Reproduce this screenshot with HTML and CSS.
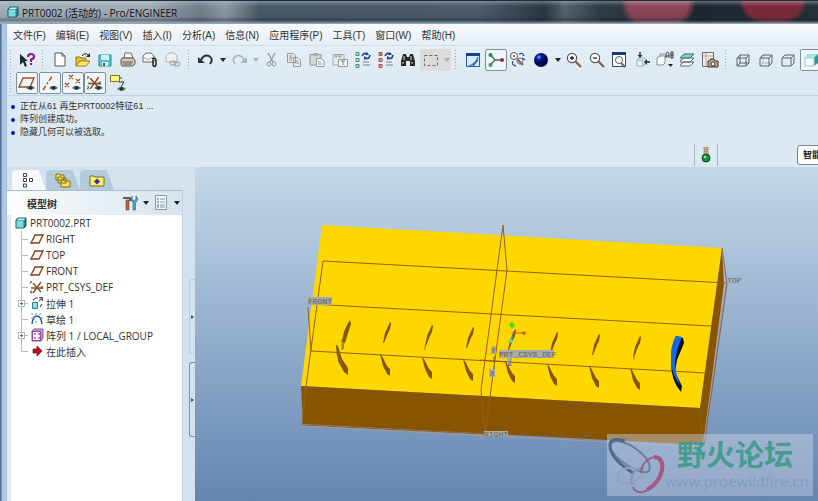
FILE: index.html
```html
<!DOCTYPE html>
<html lang="zh-CN">
<head>
    <meta charset="UTF-8">
    <meta name="viewport" content="width=device-width, initial-scale=1.0">
    <title>PRT0002 (活动的) - Pro/ENGINEER</title>
    <link rel="stylesheet" href="styles.css">
</head>
<body>
    <svg class="defs" aria-hidden="true">
        <symbol id="eye" viewBox="0 0 10 6">
            <path d="M0 3Q5-2 10 3Q5 7 0 3" fill="#5a6a66"/>
            <circle cx="5" cy="3" r="2" fill="#0d3c2a"/>
        </symbol>
        <symbol id="plane" viewBox="0 0 14 12">
            <path d="M5 2H13L9 10H1Z" fill="#fdf4ea" stroke="#7a4020" stroke-width="1.300"/>
        </symbol>
        <symbol id="csys" viewBox="0 0 14 14">
            <path d="M3 3L11 12M11 2L3 13M1 8H13" stroke="#8a4a24" stroke-width="1.4" fill="none"/>
            <path d="M0 1L2 3M2 1L0 4M11 6L13 9M13 6L11 9M0 11H2L0 13H2" stroke="#555" stroke-width=".8" fill="none"/>
        </symbol>
        <symbol id="cube" viewBox="0 0 12 12">
            <path d="M1 3L3 1H11V9L9 11H1Z" fill="#2b7f86" stroke="#1c5960"/>
            <path d="M1.500 3.500H8.500V10.500H1.500Z" fill="#79dcdc"/>
            <path d="M2 3L3.500 1.500H10.500L9 3Z" fill="#c9f5f2"/>
        </symbol>
        <symbol id="lens" viewBox="0 0 18 18">
            <path d="M10 10L16 16" stroke="#8a5a48" stroke-width="2.2"/>
            <circle cx="7" cy="7" r="4.600" fill="#fff" stroke="#555" stroke-width="1.200"/>
        </symbol>
        <symbol id="slot" viewBox="0 0 14 60" overflow="visible">
            <path d="M9 0L10 1L9 7L7 11L3 21L2 21L4 11Z" fill="#875500"/>
            <path d="M-1 32L1 34L6 44L9 47L9 54L6 52L2 44Z" fill="#875500"/>
        </symbol>
    </svg>

    <header class="titlebar">
        <svg width="12" height="12"><use href="#cube"/></svg>
        <h1>PRT0002 (活动的) - Pro/ENGINEER</h1>
    </header>

    <div class="window">
        <nav class="menubar">
            <button>文件(F)</button>
            <button>编辑(E)</button>
            <button>视图(V)</button>
            <button>插入(I)</button>
            <button>分析(A)</button>
            <button>信息(N)</button>
            <button>应用程序(P)</button>
            <button>工具(T)</button>
            <button>窗口(W)</button>
            <button>帮助(H)</button>
        </nav>

        <div class="toolbars">
            <div class="toolbar">
                <span class="grip"></span>
                <button class="tool" aria-label="上下文帮助"><svg viewBox="0 0 18 18"><path d="M2 3V14L5 11L7 16L9 15L7 10H10Z" fill="#1c2b33"/><path d="M10 6Q10 3 13 3Q16 3 16 5.500Q16 8 13 8.500V11M13 12V14" fill="none" stroke="#8d1c8d" stroke-width="2.200"/></svg></button>
                <span class="grip"></span>
                <div class="group files">
                    <button class="tool" aria-label="新建"><svg viewBox="0 0 18 18"><path d="M4 2H11L14 5V15H4Z" fill="#fff" stroke="#555"/><path d="M11 2V5H14" fill="none" stroke="#555"/></svg></button>
                    <button class="tool" aria-label="打开"><svg viewBox="0 0 18 18"><path d="M2 15V6H6L7 7H12V10" fill="#e9bf32" stroke="#9a7a10"/><path d="M2 15L6 10H16L12 15Z" fill="#ffe873" stroke="#9a7a10"/><path d="M8 5Q11 1 14 4" fill="none" stroke="#222"/><path d="M16 2V6H12Z" fill="#222"/></svg></button>
                    <button class="tool" aria-label="保存"><svg viewBox="0 0 18 18"><path d="M3 4H15V15H3Z" fill="#52c7cf" stroke="#2d8a94"/><path d="M5 4H13V9H5Z" fill="#c9f3f2"/><path d="M6 11H12V15H6Z" fill="#e5eff0"/><path d="M7 12H9V15H7Z" fill="#37656a"/></svg></button>
                    <button class="tool" aria-label="打印"><svg viewBox="0 0 18 18"><path d="M6 2H12L14 7H5Z" fill="#fff" stroke="#6b6b6b"/><path d="M3 7H14L16 9V13L14 15H3L2 13V9Z" fill="#d5c7b8" stroke="#5b5552"/><path d="M3 11H14M4 13H13" stroke="#6a5a50"/></svg></button>
                    <button class="tool" aria-label="发送"><svg viewBox="0 0 18 18"><path d="M2 5L5 2H10L13 5V11H2Z" fill="#f7f7f5" stroke="#6a6a6a"/><path d="M2 6L7 9L13 5" fill="none" stroke="#aaa"/><path d="M11 8Q15 6 15 10V14Q13 17 12 14V9" fill="none" stroke="#222" stroke-width="1.500"/></svg></button>
                    <button class="tool" aria-label="链接"><svg viewBox="0 0 18 18"><path d="M2 5L5 2H10L13 5V11H2Z" fill="#eef1f2" stroke="#b1b8bb"/><rect x="6" y="10" width="6" height="4" rx="2" fill="none" stroke="#999"/><rect x="10" y="11" width="6" height="4" rx="2" fill="none" stroke="#999"/></svg></button>
                </div>
                <span class="grip"></span>
                <button class="tool" aria-label="撤消"><svg viewBox="0 0 18 18"><path d="M4 9Q7 3 12 5Q17 8 13 13" fill="none" stroke="#26343d" stroke-width="2"/><path d="M1 6V12H8Z" fill="#26343d"/></svg></button>
                <button class="drop" aria-label="撤消列表"></button>
                <button class="tool" aria-label="重做"><svg viewBox="0 0 18 18"><path d="M14 9Q11 3 6 5Q1 8 5 13" fill="none" stroke="#aab5bb" stroke-width="1.500"/><path d="M17 6V12H10Z" fill="#aab5bb"/></svg></button>
                <button class="drop dim" aria-label="重做列表"></button>
                <div class="group edit">
                    <button class="tool" aria-label="剪切"><svg viewBox="0 0 18 18"><path d="M5 2L10 11M12 2L7 11" stroke="#8f979b" stroke-width="1.300"/><circle cx="6" cy="13" r="2" fill="none" stroke="#8f979b"/><circle cx="11" cy="13" r="2" fill="none" stroke="#8f979b"/></svg></button>
                    <button class="tool" aria-label="复制"><svg viewBox="0 0 18 18"><path d="M1.500 2.500H7L9.500 5V11.500H1.500Z M7.500 6.500H12L14.500 9V15.500H7.500Z" fill="#e6eaeb" stroke="#949c9f"/><path d="M3 5H6M3 7H7M3 9H6M9 10H12M9 12H13" stroke="#949c9f"/></svg></button>
                    <button class="tool" aria-label="粘贴"><svg viewBox="0 0 18 18"><path d="M2 3.500H13V14H2Z" fill="#d3d7d8" stroke="#949c9f"/><path d="M5 2H10V5H5Z" fill="#aab0b2"/><path d="M8.500 7.500H13L16 10V15.500H8.500Z" fill="#f3f5f5" stroke="#949c9f"/><path d="M10 11H13M10 13H14" stroke="#949c9f"/></svg></button>
                    <button class="tool" aria-label="选择性粘贴"><svg viewBox="0 0 18 18"><path d="M2 3.500H13V14H2Z" fill="#e6eaeb" stroke="#aab0b2"/><path d="M4 3V6H6V3M8 3V6H10V3" fill="none" stroke="#949c9f"/><path d="M7.500 8.500H16.500V15.500H7.500Z" fill="#f3f5f5" stroke="#949c9f"/><path d="M12 10V14M10 10H14" stroke="#888"/></svg></button>
                    <button class="tool" aria-label="再生"><svg viewBox="0 0 18 18"><path d="M2 1.500H5V4.500H2Z M2 7.500H5V10.500H2Z M2 13.500H5V16.500H2Z" fill="#a9e8cf" stroke="#4a8a78"/><path d="M8 5Q10 1 13 3M16 4Q15 9 11 7" fill="none" stroke="#1c3f93" stroke-width="1.500"/><path d="M11 4H15L13 1ZM10 9V5L13 7Z" fill="#1c3f93"/><path d="M9 11H15M9 14H16" stroke="#7a8588"/></svg></button>
                    <button class="tool" aria-label="再生管理器"><svg viewBox="0 0 18 18"><path d="M2 1.500H5V4.500H2Z" fill="#e88787" stroke="#a34d5a"/><path d="M2 7.500H5V10.500H2Z M2 13.500H5V16.500H2Z" fill="#f0a0a0" stroke="#b3404e"/><path d="M8 5Q10 1 13 3M16 4Q15 9 11 7" fill="none" stroke="#1c3f93" stroke-width="1.500"/><path d="M11 4H15L13 1ZM10 9V5L13 7Z" fill="#1c3f93"/><path d="M9 11H15M9 14H16" stroke="#7a8588"/></svg></button>
                    <button class="tool" aria-label="查找"><svg viewBox="0 0 18 18"><path d="M4 3H7L8 6H10L11 3H14L16 10V15H11V10H7V15H2V10Z" fill="#2a2a2a"/><path d="M5 5V9M12 5V9M4 11V13M13 11V13" stroke="#d5d5d5"/></svg></button>
                    <button class="tool shaded" aria-label="框选"><svg viewBox="0 0 18 18"><path d="M2.500 4.500H15.500V14.500H2.500Z" fill="none" stroke="#6d6d6d" stroke-dasharray="3 2"/></svg></button>
                </div>
                <button class="drop dim shaded" aria-label="选择方式"></button>
                <span class="grip"></span>
                <div class="group view">
                    <button class="tool" aria-label="重画"><svg viewBox="0 0 18 18"><path d="M2.500 2.500H15.500V15.500H2.500Z" fill="#d5eefb" stroke="#2a5aa0"/><path d="M2 2H16V5H2Z" fill="#17408f"/><path d="M5 15Q12 13 14 6M9 15L14 9" fill="none" stroke="#3a6daa" stroke-width="1.200"/></svg></button>
                    <button class="tool pressed" aria-label="旋转中心"><svg viewBox="0 0 18 18"><path d="M3 3L8 9L3 14M8 9H15" fill="none" stroke="#4a6655" stroke-width="1.300"/><circle cx="3.500" cy="4" r="2" fill="#15954a"/><circle cx="3.500" cy="14" r="2" fill="#2aa65a"/><circle cx="15" cy="9" r="2" fill="#a02035"/></svg></button>
                    <button class="tool" aria-label="定向模式"><svg viewBox="0 0 18 18"><circle cx="5" cy="5" r="3.500" fill="#fff" stroke="#555"/><circle cx="5" cy="5" r="1" fill="#555"/><path d="M8 8L14 14" stroke="#8a5a48" stroke-width="2"/><path d="M10 3Q14 1 15 5M13 7L16 9M4 10Q2 14 7 15" fill="none" stroke="#284c9b" stroke-width="1.300"/><circle cx="11" cy="10" r="3" fill="none" stroke="#777"/></svg></button>
                    <button class="tool" aria-label="外观库"><svg viewBox="0 0 18 18"><defs><radialGradient id="ball" cx=".35" cy=".3"><stop offset="0" stop-color="#8ab0ff"/><stop offset=".35" stop-color="#0c22a5"/><stop offset="1" stop-color="#000349"/></radialGradient></defs><circle cx="9" cy="9" r="7" fill="url(#ball)"/></svg></button>
                </div>
                <button class="drop" aria-label="外观列表"></button>
                <div class="group zoom">
                    <button class="tool" aria-label="放大"><svg viewBox="0 0 18 18"><use href="#lens"/><path d="M5 7H9M7 5V9" stroke="#222" stroke-width="1.300"/></svg></button>
                    <button class="tool" aria-label="缩小"><svg viewBox="0 0 18 18"><use href="#lens"/><path d="M5 7H9" stroke="#222" stroke-width="1.300"/></svg></button>
                    <button class="tool" aria-label="重新调整"><svg viewBox="0 0 18 18"><path d="M2.500 2.500H15.500V15.500H2.500Z" fill="#fff" stroke="#2b4c85"/><path d="M2 1H16V4H2Z" fill="#1b397f"/><path d="M11 12L15 16" stroke="#8a5a48" stroke-width="2"/><circle cx="9" cy="9" r="3.500" fill="#fff" stroke="#555"/></svg></button>
                    <button class="tool" aria-label="重定向"><svg viewBox="0 0 18 18"><path d="M4 9L6 7H12V13L10 15H4Z" fill="#fff" stroke="#8ab"/><path d="M4 9H10V15" fill="#d9eff0" stroke="#8ab"/><path d="M7 1V5M17 11H13" stroke="#222" stroke-width="1.300"/><path d="M4.500 4H9.500L7 7ZM14 8V14L11 11Z" fill="#24353a"/></svg></button>
                    <button class="tool" aria-label="已保存视图"><svg viewBox="0 0 18 18"><path d="M1 7L4 5H9V12L7 14H1Z" fill="#fff" stroke="#7f929b"/><path d="M4 5V3H9" fill="none" stroke="#7f929b"/><path d="M10 7V2.500Q11.500 0 13 2.500V7M10 5H13M15 1V7H17V1H15M15 4H17" fill="none" stroke="#333"/><path d="M12 13H17L14.500 16Z" fill="#222"/></svg></button>
                    <button class="tool" aria-label="层"><svg viewBox="0 0 18 18"><path d="M2 14L6 11H16L12 15H2M2 10L6 7H16L12 11H2" fill="#fff" stroke="#567"/><path d="M2 7L6 3H16L12 7Z" fill="#74d8cf" stroke="#456b70"/></svg></button>
                    <button class="tool" aria-label="视图管理器"><svg viewBox="0 0 18 18"><path d="M1.500 1.500H12.500V15.500H1.500Z" fill="#f5f0eb" stroke="#6d6d6d"/><path d="M5 2V15M2 5H12M7 8H12" stroke="#a8a29c"/><path d="M7 10H9L10 8H13L14 10H17V16H7Z" fill="#b9a89a" stroke="#333"/><circle cx="12" cy="13" r="2" fill="#fff" stroke="#333"/></svg></button>
                </div>
                <span class="grip"></span>
                <div class="group shade">
                    <button class="tool" aria-label="线框"><svg viewBox="0 0 18 18"><path d="M3 7H12V15H3ZM6 4H15V12H6ZM3 7L6 4M12 7L15 4M12 15L15 12M3 15L6 12" fill="none" stroke="#5c656a"/></svg></button>
                    <button class="tool" aria-label="隐藏线"><svg viewBox="0 0 18 18"><path d="M6 4V12H15M3 15L6 12" fill="none" stroke="#b3bbbe"/><path d="M3 7H12V15H3ZM3 7L6 4H15V12L12 15M12 7L15 4" fill="none" stroke="#5c656a"/></svg></button>
                    <button class="tool" aria-label="无隐藏线"><svg viewBox="0 0 18 18"><path d="M3 7H12V15H3ZM3 7L6 4H15V12L12 15M12 7L15 4" fill="none" stroke="#5c656a"/></svg></button>
                    <button class="tool pressed" aria-label="着色"><svg viewBox="0 0 18 18"><path d="M3 7L6 3H16V12L12 15H3Z" fill="#2c969b"/><path d="M3 7H12V15H3Z" fill="#f4ffff" stroke="#a9c6ca"/><path d="M3 7L6 3H16L12 7Z" fill="#9be8e4"/></svg></button>
                </div>
            </div>

            <div class="toolbar">
                <span class="grip"></span>
                <div class="group datum">
                    <button class="tool pressed" aria-label="平面显示"><svg viewBox="0 0 18 18"><path d="M5 4H16L12 13H1Z" fill="none" stroke="#a04f2c" stroke-width="1.400"/><use href="#eye" x="8" y="11" width="9" height="6"/></svg></button>
                    <button class="tool pressed" aria-label="轴显示"><svg viewBox="0 0 18 18"><path d="M2 16L12 1" stroke="#a04f2c" stroke-width="1.500" stroke-dasharray="5 2 2 2"/><use href="#eye" x="8" y="11" width="9" height="6"/></svg></button>
                    <button class="tool pressed" aria-label="点显示"><svg viewBox="0 0 18 18"><path d="M5 1L9 5M9 1L5 5M1 9L5 13M5 9L1 13M12 5L16 9M16 5L12 9" stroke="#a04f2c" stroke-width="1.300"/><use href="#eye" x="8" y="11" width="9" height="6"/></svg></button>
                    <button class="tool pressed" aria-label="坐标系显示"><svg viewBox="0 0 18 18"><use href="#csys" x="1" y="1" width="15" height="15"/><use href="#eye" x="8" y="11" width="9" height="6"/></svg></button>
                    <button class="tool" aria-label="注释显示"><svg viewBox="0 0 18 18"><path d="M1.500 1.500H10.500V7.500H1.500Z" fill="#fbf67a" stroke="#77752e"/><path d="M11 4H13M10 8H15L12 13" fill="none" stroke="#333"/><use href="#eye" x="8" y="12" width="9" height="6"/></svg></button>
                </div>
            </div>
        </div>

        <section class="messages">
            <ul>
                <li>正在从61 再生PRT0002特征61 ...</li>
                <li>阵列创建成功。</li>
                <li>隐藏几何可以被选取。</li>
            </ul>
            <div class="status">
                <span class="lamp"><svg width="10" height="16" viewBox="0 0 10 16"><path d="M3 0H7V3H3ZM3 4H7V7H3Z" fill="#d3b08f" stroke="#9f7a58" stroke-width=".8"/><circle cx="5" cy="11" r="4" fill="#16913a" stroke="#0a4e1c"/><circle cx="4" cy="10" r="1.300" fill="#8aee9a"/></svg></span>
                <select aria-label="过滤器">
                    <option>智能</option>
                    <option>特征</option>
                    <option>几何</option>
                </select>
            </div>
        </section>

        <main class="work">
            <aside class="navigator">
                <div class="tabs">
                    <button class="tab active" aria-label="模型树"><svg width="14" height="16" viewBox="0 0 14 16"><path d="M2.500 1.500H5.500V4.500H2.500ZM2.500 6.500H5.500V9.500H2.500ZM2.500 12H5.500V15H2.500ZM8.500 6.500H11.500V9.500H8.500Z" fill="#fff" stroke="#444"/></svg></button>
                    <button class="tab" aria-label="文件夹浏览器"><svg width="16" height="16" viewBox="0 0 16 16"><path d="M1 2H4L5 3H9V8H1ZM3 5H6L7 6H11V11H3ZM6 8H9L10 9H15V15H6Z" fill="#f6e15b" stroke="#7d6c14"/></svg></button>
                    <button class="tab" aria-label="收藏夹"><svg width="16" height="16" viewBox="0 0 16 16"><path d="M1 4H5L6 5H15V14H1Z" fill="#faef6f" stroke="#7d6c14"/><path d="M8 6.500L11 9.500L8 12.500L5 9.500Z" fill="#3c2e9a"/></svg></button>
                </div>
                <div class="panel">
                    <div class="panel-head">
                        <h2>模型树</h2>
                        <button class="tool" aria-label="设置"><svg viewBox="0 0 18 18"><path d="M2 3H9L11 5V7H8V5H2Z" fill="#555e66"/><path d="M5 6H8V16H5Z" fill="#b06a3f" stroke="#6e4024" stroke-width=".6"/><path d="M11 2V5L13 7L15 5V2L17 5L14.500 9V16H12V9L10 6Z" fill="#4ba3c7" stroke="#2b6080" stroke-width=".6"/></svg></button>
                        <button class="drop" aria-label="设置列表"></button>
                        <button class="tool" aria-label="显示"><svg viewBox="0 0 18 18"><path d="M3.500 1.500H14.500V15.500H3.500Z" fill="#f0f5fa" stroke="#8897a8"/><path d="M5 5H7M5 8H7M5 11H7M5 13H7" stroke="#2a6aa5"/><path d="M8 5H13M8 8H13M8 11H13M8 13H13" stroke="#8b98a5"/></svg></button>
                        <button class="drop" aria-label="显示列表"></button>
                    </div>
                    <ul class="tree">
                        <li class="root"><svg width="12" height="12"><use href="#cube"/></svg>PRT0002.PRT</li>
                        <li><span class="branch"></span><svg width="14" height="12"><use href="#plane"/></svg>RIGHT</li>
                        <li><span class="branch"></span><svg width="14" height="12"><use href="#plane"/></svg>TOP</li>
                        <li><span class="branch"></span><svg width="14" height="12"><use href="#plane"/></svg>FRONT</li>
                        <li><span class="branch"></span><svg width="14" height="14"><use href="#csys"/></svg>PRT_CSYS_DEF</li>
                        <li><span class="branch"><button class="expand" aria-label="展开"></button></span><svg width="14" height="14" viewBox="0 0 14 14"><path d="M2.500 6.500H7.500V12.500H2.500Z" fill="#8ce3df" stroke="#337e86"/><path d="M3 4L6 2H8M10 11L12 8M9 5L12 2M9 1.500H12.500V5" fill="none" stroke="#556" stroke-width="1.200"/></svg>拉伸 1</li>
                        <li><span class="branch"></span><svg width="14" height="14" viewBox="0 0 14 14"><path d="M2 12Q3 4 7 4Q11 4 12 12" fill="none" stroke="#235a9f" stroke-width="1.500"/><path d="M1 2H13M1 6H3M11 6H13M5 10H9" stroke="#4ba4c4" stroke-dasharray="2 2"/></svg>草绘 1</li>
                        <li><span class="branch"><button class="expand" aria-label="展开"></button></span><svg width="14" height="14" viewBox="0 0 14 14"><path d="M2 3L4 1H13V10L11 13H2Z" fill="#c3a3cc" stroke="#87509a"/><path d="M2.500 3.500H10.500V12.500H2.500Z" fill="#fff" stroke="#87459c"/><path d="M4 6H6M8 6H10M4 10H6M8 10H10" stroke="#b04ca2" stroke-width="1.500"/></svg>阵列 1 / LOCAL_GROUP</li>
                        <li class="last"><span class="branch"></span><svg width="14" height="12" viewBox="0 0 14 12"><path d="M3 4H7V1L12 6L7 11V8H3Z" fill="#b80f20" stroke="#6e0710" stroke-width=".7"/></svg>在此插入</li>
                    </ul>
                </div>
                <div class="sash">
                    <button class="faint" aria-label="展开导航器"></button>
                    <button aria-label="收起导航器"></button>
                </div>
            </aside>

            <section class="viewport">
                <svg class="model" viewBox="195 167 623 334" preserveAspectRatio="xMinYMin meet">
                    <!-- block -->
                    <path d="M322 225L722 248L700 408L301 386Z" fill="#ffd700"/>
                    <path d="M301 386L700 408L703 445L303 424Z" fill="#875500"/>
                    <path d="M722 248L724 284L703 445L700 408Z" fill="#875500"/>
                    <!-- datum planes -->
                    <g fill="none" stroke="#966018">
                        <path d="M306 386L323 261L726 283M310 304L711 326M311 351L705 373"/>
                        <path d="M308 307L311 351M306 386L302 425L485 434L481 390L503 225L507 270L485 434"/>
                        <path d="M480 360L511 362"/>
                    </g>
                    <path d="M302 426L703 447L726 284" fill="none" stroke="#a39a9c"/>
                    <path d="M722 248L727 284L704 445" fill="none" stroke="#8f6048"/>
                    <!-- slots -->
                    <path d="M350 320Q343 330 342 342L345 343L348 333L351 324Z" fill="#875500"/>
                    <path d="M342 339V350M344 342L343 349" stroke="#777044"/>
                    <path d="M336 345L338 346L342 359L348 368L348 375L344 372L338 361Z" fill="#875500"/>
                    <path d="M337 345V355L342 364" fill="none" stroke="#77756a"/>
                    <use href="#slot" x="381" y="322" width="14" height="60"/>
                    <use href="#slot" x="423" y="325" width="14" height="60"/>
                    <use href="#slot" x="464" y="327" width="14" height="60"/>
                    <use href="#slot" x="506" y="329" width="14" height="60"/>
                    <use href="#slot" x="548" y="332" width="14" height="60"/>
                    <use href="#slot" x="590" y="334" width="14" height="60"/>
                    <use href="#slot" x="631" y="336" width="14" height="60"/>
                    <path d="M425 346V350M634 356V360" stroke="#a07a20"/>
                    <path d="M676 336L683 338L684 343L677 360L675 372L682 386L681 392Q671 381 671 362Q671 345 676 336Z" fill="#07101f"/>
                    <path d="M676 336L682 337Q676 350 675 363Q676 378 681 386Q672 376 671 362Q670 346 676 336Z" fill="#1468f0"/>
                    <!-- coordinate system -->
                    <path d="M494 346V375" stroke="#6c6b5c" stroke-dasharray="7 3"/>
                    <path d="M512 333H523" stroke="#d6522a"/>
                    <path d="M512 326V342" stroke="#30cbb0" stroke-dasharray="3 2"/>
                    <circle cx="512" cy="325" r="2.500" fill="#3be010"/>
                    <circle cx="524" cy="333" r="1.700" fill="#dc4c24"/>
                    <circle cx="511" cy="341" r="2" fill="#40e4cc"/>
                    <g fill="#a6aaa8">
                        <rect x="308" y="297" width="24" height="8"/>
                        <rect x="499" y="350" width="55" height="8"/>
                        <rect x="491" y="347" width="5" height="7"/>
                        <rect x="489" y="369" width="6" height="8"/>
                        <rect x="507" y="358" width="5" height="8"/>
                        <rect x="484" y="431" width="24" height="6"/>
                    </g>
                    <g class="labels">
                        <text x="308" y="304">FRONT</text>
                        <text x="499" y="357">PRT_CSYS_DEF</text>
                        <text x="491" y="353">Y</text>
                        <text x="490" y="376">X</text>
                        <text x="507" y="366">Z</text>
                        <text x="484" y="437">RIGHT</text>
                        <text x="727" y="283">TOP</text>
                    </g>
                </svg>
                <div class="watermark">
                    <svg width="58" height="60" viewBox="0 0 58 60">
                        <g fill="none">
                            <path d="M4 8C14 0 48 22 42 36C36 42 4 24 3 10" stroke="#6880a5" stroke-width="2"/>
                            <path d="M26 38Q4 24 3 12Q2 1 18 6" stroke="#4f688f" stroke-width="3"/>
                            <path d="M30 36C20 28 8 38 11 44C14 52 30 48 35 39" stroke="#8fa3c1" stroke-width="2"/>
                            <path d="M38 34C30 30 22 40 25 50" stroke="#8398bb" stroke-width="2"/>
                            <path d="M34 38C34 26 48 18 54 24C60 34 50 54 36 57Q28 58 26 52" stroke="#9a5f86" stroke-width="2"/>
                            <path d="M47 22C60 22 58 44 40 55" stroke="#a35a80" stroke-width="4"/>
                        </g>
                    </svg>
                    <div>
                        <strong>野火论坛</strong>
                        <a href="#">www.proewildfire.cn</a>
                    </div>
                </div>
            </section>
        </main>
    </div>
</body>
</html>
```

FILE: styles.css
```css
* {
    margin: 0;
    padding: 0;
    box-sizing: border-box;
}

body {
    height: 100vh;
    display: flex;
    flex-direction: column;
    overflow: hidden;
    font-family: "Open Sans", "Noto Sans CJK SC", sans-serif;
    font-size: 10px;
    color: #333;
    background: linear-gradient(90deg, #52708f 1px, #a9c0e0 2px, #b5cbea 6px, #8fa9cc 7px);
}

button {
    border: none;
    background: none;
    font: inherit;
    color: inherit;
}

ul {
    list-style: none;
}

svg {
    flex: none;
}

.defs {
    position: absolute;
    width: 0;
    height: 0;
}

/* title bar */
.titlebar {
    height: 24px;
    flex: none;
    display: flex;
    align-items: center;
    gap: 3px;
    padding-left: 7px;
    border-top: 1px solid #222b33;
    border-bottom: 1px solid #93a8b6;
    background:
        linear-gradient(180deg, rgba(190, 210, 225, 0.4) 0, rgba(30, 40, 50, 0) 5px, rgba(30, 40, 50, 0.1) 16px, rgba(15, 25, 35, 0.4) 19px, rgba(150, 175, 190, 0.6) 22px),
        radial-gradient(ellipse 38px 34px at 658px 0, #8d4656 80%, transparent 100%),
        radial-gradient(ellipse 34px 26px at 773px 0, #7d2b3a 85%, transparent 100%),
        linear-gradient(90deg, #a4b2bc 0, #a1adb7 150px, #717f8b 200px, #919ca5 225px, #4b5a68 260px, #4e5c6c 480px, #2d3740 545px, #59636b 565px, #303b44 600px, #1e272f 700px, #252f37 100%);
}

.titlebar h1 {
    font-size: 10px;
    font-weight: 400;
    color: #111;
}

.window {
    flex: 1;
    min-height: 0;
    margin-left: 7px;
    display: flex;
    flex-direction: column;
    background: #dbe9f2;
}

/* menus and toolbars */
.menubar {
    height: 22px;
    flex: none;
    display: flex;
    align-items: center;
    gap: 10px;
    padding-left: 6px;
    font-family: "Liberation Sans", "Noto Sans CJK SC", sans-serif;
    background: linear-gradient(#f7fafd, #e6eef6);
    border-bottom: 1px solid #d3e0e9;
}

.toolbars {
    flex: none;
    height: 50px;
    display: flex;
    flex-direction: column;
    gap: 1px;
    padding-top: 3px;
    border-bottom: 1px solid #c5d6e1;
    background: linear-gradient(#e4eef6, #dae8f1);
}

.toolbar {
    display: flex;
    align-items: center;
    overflow: hidden;
}

.group {
    flex: none;
    display: flex;
    justify-content: space-between;
}

.files {
    width: 135px;
}

.edit {
    width: 181px;
}

.view,
.shade {
    width: 90px;
}

.zoom {
    width: 158px;
}

.datum {
    width: 113px;
}

.grip {
    flex: none;
    width: 3px;
    height: 22px;
    margin: 0 5px 0 3px;
    background: radial-gradient(circle, #8fa7b8 1px, transparent 1px) 0 0 / 3px 3px;
}

.grip:first-child {
    margin: 0 4px 0 2px;
}

.tool {
    flex: none;
    width: 22px;
    height: 22px;
    display: flex;
    align-items: center;
    justify-content: center;
}

.tool svg {
    width: 18px;
    height: 18px;
}

.pressed {
    border: 1px solid #7d919e;
    border-radius: 2px;
    background: #f0f6f8;
}

.shaded {
    background: #dcdcdb;
}

.drop {
    flex: none;
    width: 11px;
    height: 22px;
    display: flex;
    align-items: center;
    justify-content: center;
}

.drop.shaded {
    width: 9px;
}

.drop::before {
    content: "";
    border: 3px solid transparent;
    border-top: 4px solid #222;
    border-bottom: none;
}

.drop.dim::before {
    border-top-color: #a9b1b5;
}

/* message log */
.messages {
    flex: none;
    height: 71px;
    display: flex;
    justify-content: space-between;
    overflow: hidden;
    padding: 4px 0 0 4px;
    font-family: "Liberation Sans", "Noto Sans CJK SC", sans-serif;
    font-size: 9px;
    line-height: 13px;
}

.messages li {
    display: flex;
    align-items: center;
    gap: 5px;
}

.messages li::before {
    content: "";
    width: 4px;
    height: 4px;
    border-radius: 50%;
    background: #1414b4;
}

.status {
    align-self: flex-end;
    display: flex;
    align-items: center;
    gap: 79px;
    width: 124px;
    margin-bottom: 1px;
}

.lamp {
    flex: none;
    width: 24px;
    height: 22px;
    display: flex;
    align-items: center;
    justify-content: center;
    border: 1px solid #a9b6bf;
    border-width: 0 1px;
}

.status select {
    flex: none;
    width: 90px;
    height: 20px;
    padding: 0 1px;
    border: 1px solid #6f8796;
    border-radius: 3px;
    background: #fff;
    color: #222;
    font: bold 9px "Liberation Sans", "Noto Sans CJK SC", sans-serif;
}

/* model tree */
.work {
    flex: 1;
    min-height: 0;
    display: flex;
}

.navigator {
    flex: none;
    width: 188px;
    display: grid;
    grid-template: 23px 1fr / 1fr 13px;
    background: #d3e2ec;
}

.tabs {
    grid-column: 1 / 3;
    display: flex;
    align-items: flex-end;
    padding-left: 5px;
}

.tab {
    width: 34px;
    height: 20px;
    display: flex;
    align-items: center;
    padding-left: 9px;
    border-radius: 4px 4px 0 0;
    clip-path: polygon(0 0, 78% 0, 100% 100%, 0 100%);
    background: #b4cbdc;
}

.tab.active {
    background: #f6fafc;
}

.panel {
    display: flex;
    flex-direction: column;
    padding: 0 0 0 4px;
    border-top: 1px solid #a9bdcb;
    background: linear-gradient(90deg, #fcfdfe, #d6e4ed) 0 0 / 100% 24px no-repeat, #e6e8f2;
}

.panel-head {
    height: 24px;
    flex: none;
    display: flex;
    align-items: center;
}

.panel-head h2 {
    flex: 1;
    padding-left: 16px;
    font-size: 10px;
    font-weight: 700;
}

.panel-head .tool {
    width: 20px;
}

.tree {
    flex: 1;
    padding-left: 4px;
    background: #fff;
    border-radius: 2px 2px 0 0;
}

.tree li {
    height: 16px;
    display: flex;
    align-items: center;
    gap: 2px;
    white-space: nowrap;
}

.tree .root {
    gap: 3px;
}

.branch {
    width: 13px;
    height: 16px;
    display: flex;
    align-items: center;
    padding-left: 3px;
    background:
        linear-gradient(#bbb, #bbb) 6px 0 / 1px 100% no-repeat,
        linear-gradient(#bbb, #bbb) 6px 8px / 8px 1px no-repeat;
}

.last .branch {
    background-size: 1px 8px, 8px 1px;
}

.expand {
    width: 7px;
    height: 7px;
    border: 1px solid #a9b8c5;
    background:
        linear-gradient(#667, #667) center / 3px 1px no-repeat,
        linear-gradient(#667, #667) center / 1px 3px no-repeat,
        #fff;
}

.sash {
    display: flex;
    flex-direction: column;
    align-items: flex-end;
    gap: 8px;
    padding-top: 89px;
    border-left: 1px solid #c3d2de;
}

.sash button {
    width: 6px;
    height: 75px;
    display: flex;
    align-items: center;
    justify-content: center;
    border: 1px solid #7b919f;
    border-right: none;
    border-radius: 3px 0 0 3px;
}

.sash .faint {
    border-color: #bccddb;
}

.sash button::before {
    content: "";
    border: 2px solid transparent;
    border-left: 3px solid #455;
    border-right: none;
}

/* 3D view */
.viewport {
    flex: 1;
    min-width: 0;
    position: relative;
    background: linear-gradient(#c3d8e8, #6585b1);
}

.model {
    display: block;
    width: 100%;
    height: 100%;
}

.labels {
    font-family: "Liberation Mono", monospace;
    font-size: 8px;
    fill: #655e58;
}

.watermark {
    position: absolute;
    right: 5px;
    bottom: 5px;
    width: 206px;
    height: 62px;
    display: flex;
    align-items: center;
    background: rgba(213, 220, 236, 0.42);
}

.watermark div {
    display: flex;
    flex-direction: column;
    white-space: nowrap;
}

.watermark strong {
    padding-left: 12px;
    font: bold 29px/32px "Noto Sans CJK SC", sans-serif;
    color: #459d90;
}

.watermark a {
    font: 15px/24px "Open Sans", sans-serif;
    color: #7f9cc6;
    text-decoration: none;
}
```
